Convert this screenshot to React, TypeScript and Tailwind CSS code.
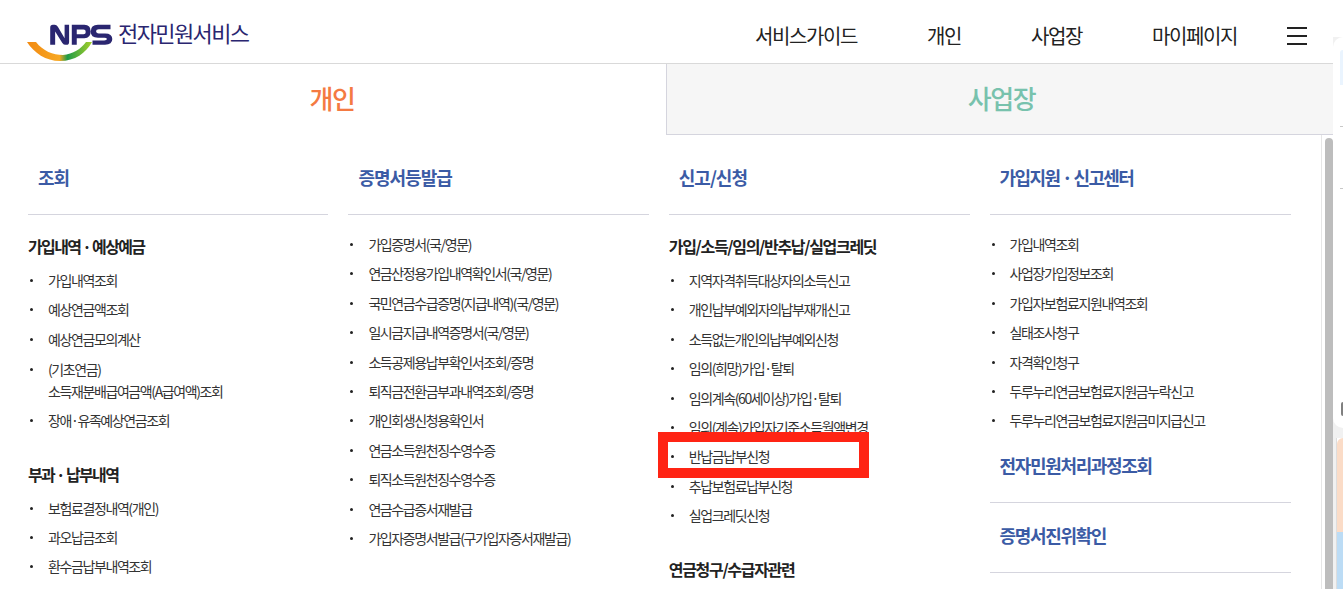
import React from "react";

const Bullet = ({ children, h = "h-[29.4px]", className = "" }: { children: React.ReactNode; h?: string; className?: string }) => (
  <li className={`flex ${h} items-start ${className}`}>
    <span className="mt-[8px] mr-[15px] ml-[2px] h-[3px] w-[3px] flex-none rounded-full bg-[#222222]" />
    <span className="text-[14px] leading-[18px] tracking-[-1.4px] text-[#333333] whitespace-nowrap">{children}</span>
  </li>
);

const List = ({ items }: { items: string[] }) => (
  <ul className="flex flex-col">
    {items.map((item) => (
      <Bullet key={item}>{item}</Bullet>
    ))}
  </ul>
);

const ColumnHead = ({ children, tracking = "tracking-[-1px]" }: { children: React.ReactNode; tracking?: string }) => (
  <div className={`h-[50px] border-b border-[#d5d5de] pl-[10px] text-[18px] leading-[24px] font-bold ${tracking} text-[#3b5ba5]`}>
    {children}
  </div>
);

const SubHead = ({ children, className = "" }: { children: React.ReactNode; className?: string }) => (
  <div className={`text-[16px] leading-[22px] font-bold text-[#222222] ${className}`}>{children}</div>
);

const LinkHead = ({ children, className = "" }: { children: React.ReactNode; className?: string }) => (
  <div className={`border-b border-[#d5d5de] pl-[10px] text-[18px] leading-[24px] font-bold tracking-[-1.35px] text-[#3b5ba5] ${className}`}>
    {children}
  </div>
);

const Logo = () => (
  <svg width="91" height="42" viewBox="0 0 91 42" className="flex-none">
    <defs>
      <linearGradient id="swoosh" x1="0" x2="1" y1="0" y2="0">
        <stop offset="0" stopColor="#f28a12" />
        <stop offset="0.5" stopColor="#f7a823" />
        <stop offset="0.62" stopColor="#1f9b47" />
        <stop offset="1" stopColor="#a6cf2a" />
      </linearGradient>
    </defs>
    <path d="M0 22 L9 22 C16 31 26 35 36 35 C46 34 54 29 59 22 L65 22 C59 33 48 41 33 41 C19 41 7 33 0 22 Z" fill="url(#swoosh)" />
    <g transform="translate(2.500,2) scale(0.9,0.95)">
      <path d="M23 24 V6 Q23 3 26 3 H28 Q30 3 31.500 5 L39 17 V3 H44 V21 Q44 24 41 24 H40 Q38 24 36.500 22 L28.500 10 V24 Z" fill="#2a2670" />
      <path d="M47 24 V3 H61 Q68 3 68 10 Q68 17 61 17 H52.500 V24 Z M52.500 8 V13 H60 Q62.500 13 62.500 10.500 Q62.500 8 60 8 Z" fill="#2a2670" />
      <path d="M70 24 V19.500 H83 Q86 19.500 86 18 Q86 16.500 83 16.500 H76 Q68 16.500 68 10 Q68 3 76 3 H90 V7.500 H77 Q74 7.500 74 9.500 Q74 12 77 12 H84 Q92 12 92 18 Q92 24 84 24 Z" fill="#2a2670" />
    </g>
  </svg>
);

export default function App() {
  return (
    <div className="relative h-[589px] w-[1343px] overflow-hidden bg-white">
      <div className="font-['Noto_Sans_CJK_KR','Noto_Sans',sans-serif]">
        <header className="flex h-[64px] items-start border-b border-[#d9d9d9]">
          <div className="mt-[20px] ml-[27px] flex items-start">
            <Logo />
            <span className="mt-[-3px] text-[22px] leading-[30px] tracking-[-1.6px] text-[#2a2670]">전자민원서비스</span>
          </div>
          <nav className="mt-[21px] ml-auto flex items-center text-[20px] leading-[30px] tracking-[-1.4px] text-[#222222]">
            <span className="mr-[70px]">서비스가이드</span>
            <span className="mr-[70px]">개인</span>
            <span className="mr-[70px]">사업장</span>
            <span className="mr-[50px]">마이페이지</span>
            <span className="mr-[36px] flex w-[20px] flex-col gap-[6px]">
              <i className="h-[2px] bg-[#222222]" />
              <i className="h-[2px] bg-[#222222]" />
              <i className="h-[2px] bg-[#222222]" />
            </span>
          </nav>
        </header>

        <div className="flex h-[71px] w-[1343px]">
          <div className="flex w-[666px] items-center justify-center pr-[2px] pb-[4px] text-[26px] font-medium tracking-[-1.5px] text-[#f47a42]">개인</div>
          <div className="flex flex-1 items-center justify-center border-b border-l border-[#d5d5de] bg-[#f6f6f6] pr-[7px] pb-[4px] text-[26px] font-medium tracking-[-1.5px] text-[#78c2ad]">사업장</div>
        </div>

        <div className="flex h-[454px] w-[1322px] gap-[20px] overflow-hidden border-r border-[#e6e6e6] pt-[30px] pl-[28px]">
          <div className="w-[300.400px] flex-none">
            <ColumnHead>조회</ColumnHead>
            <SubHead className="mt-[20px] mb-[14px] tracking-[-1.65px]">가입내역 · 예상예금</SubHead>
            <List items={["가입내역조회", "예상연금액조회", "예상연금모의계산"]} />
            <Bullet h="h-[51px]" className="mt-[1px]">
              (기초연금)
              <br />
              <span className="leading-[26px]">소득재분배급여금액(A급여액)조회</span>
            </Bullet>
            <List items={["장애·유족예상연금조회"]} />
            <SubHead className="mt-[22px] mb-[14px] tracking-[-1.65px]">부과 · 납부내역</SubHead>
            <List items={["보험료결정내역(개인)", "과오납금조회", "환수금납부내역조회"]} />
          </div>
          <div className="w-[300.400px] flex-none">
            <ColumnHead>증명서등발급</ColumnHead>
            <div className="mt-[20px]">
              <List
                items={[
                  "가입증명서(국/영문)",
                  "연금산정용가입내역확인서(국/영문)",
                  "국민연금수급증명(지급내역)(국/영문)",
                  "일시금지급내역증명서(국/영문)",
                  "소득공제용납부확인서조회/증명",
                  "퇴직금전환금부과내역조회/증명",
                  "개인회생신청용확인서",
                  "연금소득원천징수영수증",
                  "퇴직소득원천징수영수증",
                  "연금수급증서재발급",
                  "가입자증명서발급(구가입자증서재발급)",
                ]}
              />
            </div>
          </div>
          <div className="w-[300.800px] flex-none">
            <ColumnHead>신고/신청</ColumnHead>
            <SubHead className="mt-[20px] mb-[14px] tracking-[-1.3px]">가입/소득/임의/반추납/실업크레딧</SubHead>
            <List
              items={[
                "지역자격취득대상자의소득신고",
                "개인납부예외자의납부재개신고",
                "소득없는개인의납부예외신청",
                "임의(희망)가입·탈퇴",
                "임의계속(60세이상)가입·탈퇴",
                "임의(계속)가입자기준소득월액변경",
                "반납금납부신청",
                "추납보험료납부신청",
                "실업크레딧신청",
              ]}
            />
            <SubHead className="mt-[22px] tracking-[-1.3px]">연금청구/수급자관련</SubHead>
          </div>
          <div className="w-[301px] flex-none">
            <ColumnHead tracking="tracking-[-1.6px]">가입지원 · 신고센터</ColumnHead>
            <div className="mt-[20px]">
              <List
                items={[
                  "가입내역조회",
                  "사업장가입정보조회",
                  "가입자보험료지원내역조회",
                  "실태조사청구",
                  "자격확인청구",
                  "두루누리연금보험료지원금누락신고",
                  "두루누리연금보험료지원금미지급신고",
                ]}
              />
            </div>
            <div className="-mt-[9px]">
              <LinkHead className="h-[71px] pt-[21px]">전자민원처리과정조회</LinkHead>
              <LinkHead className="h-[70px] pt-[20px]">증명서진위확인</LinkHead>
            </div>
          </div>
        </div>
      </div>

      {/* scrollbar */}
      <div className="absolute top-[138px] left-[1325px] h-[451px] w-[8px] rounded-t-[4px] bg-[#bdbdbd]" />

      {/* side widget peeking in at the right edge */}
      <div className="absolute top-[37px] left-[1333px] h-[552px] w-[10px] overflow-hidden bg-[#f1f1f1]">
        <div className="absolute top-[401px] left-[4px] h-[151px] w-[6px] bg-white" />
        <div className="absolute top-[401px] left-[3px] h-[151px] w-px bg-[#dddddd]" />
        <div className="absolute top-[401px] left-[4px] h-[151px] w-[6px] overflow-hidden rounded-tl-[12px]">
          <div className="h-[94px] bg-[#fbdcc7]" />
          <div className="h-[57px] bg-[#bcdcf5]" />
        </div>
        <div className="absolute top-0 left-0 h-[391px] w-[10px] rounded-l-[12px] bg-white">
          <div className="absolute top-[13px] left-[7px] h-[35px] w-[3px] rounded-tl-[6px] bg-[#eaf4fe]" />
          <div className="absolute top-[89px] left-[7px] h-px w-[3px] bg-[#c8c8c8]" />
          <div className="absolute top-[151px] left-[7px] h-px w-[3px] bg-[#c8c8c8]" />
          <div className="absolute top-[365px] left-[8px] h-[14px] w-[2px] rounded-l-full bg-[#808080]" />
        </div>
      </div>

      {/* highlight box */}
      <div className="absolute top-[432px] left-[658px] h-[46px] w-[211px] border-[10px] border-[#ff2414]" />
    </div>
  );
}
